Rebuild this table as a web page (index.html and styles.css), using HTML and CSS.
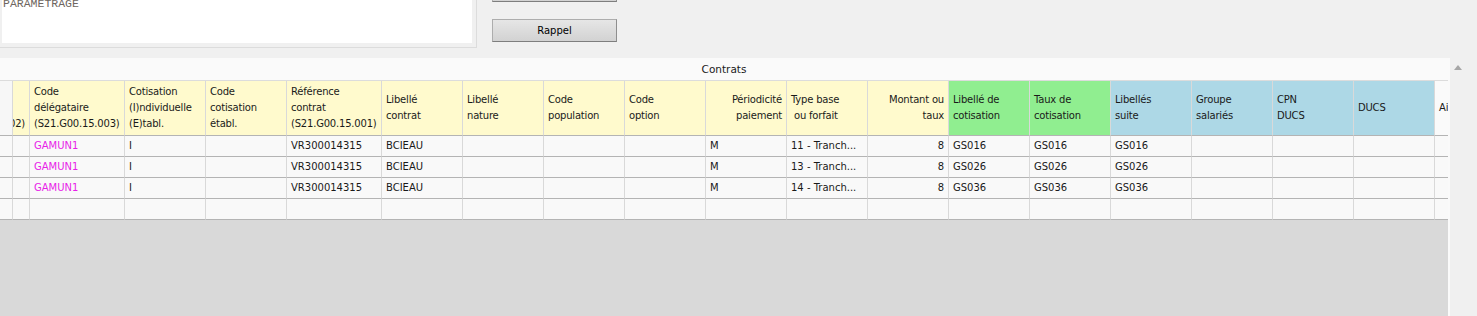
FILE: index.html
```html
<!DOCTYPE html>
<html>
<head>
    <title>Contrats</title>
    <meta charset="utf-8" />
    <link rel="stylesheet" href="styles.css">
</head>
<body>
    <div class="top">
        <div class="memo">
            <div class="memo-text">PARAMETRAGE</div>
        </div>
        <div class="actions">
            <button class="win-button"></button>
            <button class="win-button">Rappel</button>
        </div>
    </div>

    <div class="main">
        <div class="grid-panel">
            <div class="caption">Contrats</div>

            <div class="row head">
                <div class="hcell corner"></div>
                <div class="hcell yellow clip"><div>Code<br>organisme<br>(S21.G00.15.002)</div></div>
                <div class="hcell yellow">Code<br>délégataire<br>(S21.G00.15.003)</div>
                <div class="hcell yellow">Cotisation<br>(I)ndividuelle<br>(E)tabl.</div>
                <div class="hcell yellow">Code<br>cotisation<br>établ.</div>
                <div class="hcell yellow">Référence<br>contrat<br>(S21.G00.15.001)</div>
                <div class="hcell yellow">Libellé<br>contrat</div>
                <div class="hcell yellow">Libellé<br>nature</div>
                <div class="hcell yellow">Code<br>population</div>
                <div class="hcell yellow">Code<br>option</div>
                <div class="hcell yellow right">Périodicité<br>paiement</div>
                <div class="hcell yellow">Type base<br>&nbsp;ou forfait</div>
                <div class="hcell yellow right">Montant ou<br>taux</div>
                <div class="hcell green">Libellé de<br>cotisation</div>
                <div class="hcell green">Taux de<br>cotisation</div>
                <div class="hcell blue">Libellés<br>suite</div>
                <div class="hcell blue">Groupe<br>salariés</div>
                <div class="hcell blue">CPN<br>DUCS</div>
                <div class="hcell blue">DUCS</div>
                <div class="hcell plain">Aide</div>
            </div>

            <div class="row">
                <div class="cell"></div><div class="cell"></div>
                <div class="cell pink">GAMUN1</div>
                <div class="cell">I</div>
                <div class="cell"></div>
                <div class="cell">VR300014315</div>
                <div class="cell">BCIEAU</div>
                <div class="cell"></div><div class="cell"></div><div class="cell"></div>
                <div class="cell">M</div>
                <div class="cell">11 - Tranch...</div>
                <div class="cell num">8</div>
                <div class="cell">GS016</div>
                <div class="cell">GS016</div>
                <div class="cell">GS016</div>
                <div class="cell"></div><div class="cell"></div><div class="cell"></div><div class="cell"></div>
            </div>
            <div class="row">
                <div class="cell"></div><div class="cell"></div>
                <div class="cell pink">GAMUN1</div>
                <div class="cell">I</div>
                <div class="cell"></div>
                <div class="cell">VR300014315</div>
                <div class="cell">BCIEAU</div>
                <div class="cell"></div><div class="cell"></div><div class="cell"></div>
                <div class="cell">M</div>
                <div class="cell">13 - Tranch...</div>
                <div class="cell num">8</div>
                <div class="cell">GS026</div>
                <div class="cell">GS026</div>
                <div class="cell">GS026</div>
                <div class="cell"></div><div class="cell"></div><div class="cell"></div><div class="cell"></div>
            </div>
            <div class="row">
                <div class="cell"></div><div class="cell"></div>
                <div class="cell pink">GAMUN1</div>
                <div class="cell">I</div>
                <div class="cell"></div>
                <div class="cell">VR300014315</div>
                <div class="cell">BCIEAU</div>
                <div class="cell"></div><div class="cell"></div><div class="cell"></div>
                <div class="cell">M</div>
                <div class="cell">14 - Tranch...</div>
                <div class="cell num">8</div>
                <div class="cell">GS036</div>
                <div class="cell">GS036</div>
                <div class="cell">GS036</div>
                <div class="cell"></div><div class="cell"></div><div class="cell"></div><div class="cell"></div>
            </div>
            <!-- empty row for a new entry -->
            <div class="row">
                <div class="cell"></div><div class="cell"></div><div class="cell"></div><div class="cell"></div>
                <div class="cell"></div><div class="cell"></div><div class="cell"></div><div class="cell"></div>
                <div class="cell"></div><div class="cell"></div><div class="cell"></div><div class="cell"></div>
                <div class="cell"></div><div class="cell"></div><div class="cell"></div><div class="cell"></div>
                <div class="cell"></div><div class="cell"></div><div class="cell"></div><div class="cell"></div>
            </div>
        </div>
        <div class="vscroll">
            <div class="arrow-up"></div>
        </div>
    </div>
</body>
</html>
```

FILE: styles.css
```css
html, body {
    margin: 0;
    height: 316px;
    overflow: hidden;
    background-color: #f0f0f0;
    font-family: "DejaVu Sans", Verdana, sans-serif;
    font-size: 10px;
    color: #1a1a1a;
}

.top {
    display: flex;
    height: 48px;
}

.memo {
    width: 470px;
    height: 43px;
    padding: 0 4px 4px 2px;
    border-right: 1px solid #dcdcdc;
    border-bottom: 1px solid #dcdcdc;
}

.memo-text {
    height: 43px;
    padding: 0 1px;
    background-color: #ffffff;
    font-family: "Liberation Mono", "Courier New", monospace;
    font-size: 11.5px;
    line-height: 8px;
    color: #6e6660;
    overflow: hidden;
}

.actions {
    display: flex;
    flex-direction: column;
    gap: 17px;
    margin-left: 15px;
    margin-top: -21px;
}

.win-button {
    width: 125px;
    height: 23px;
    padding: 0;
    border: 1px solid #adadad;
    border-right-color: #8e8e8e;
    border-bottom-color: #7e7e7e;
    border-radius: 0;
    background: linear-gradient(#e6e6e6, #d2d2d2);
    font-family: "DejaVu Sans", Verdana, sans-serif;
    font-size: 10px;
    color: #000;
}

.main {
    display: flex;
    margin-top: 10px;
    height: 258px;
}

.grid-panel {
    width: 1448px;
    border-right: 2px solid #fafafa;
    background-color: #d9d9d9;
    overflow: hidden;
}

.caption {
    height: 22px;
    line-height: 22px;
    text-align: center;
    background-color: #fafafa;
    border-bottom: 1px solid #dcdcdc;
    font-size: 10.5px;
}

.row {
    display: grid;
    grid-template-columns: 13px 17px 95px 81px 81px 95px repeat(14, 81px);
}

.hcell, .cell {
    box-sizing: border-box;
    border-right: 1px solid #d9d9d9;
    border-bottom: 1px solid #b4b4b4;
    padding: 0 4px;
    overflow: hidden;
}

.hcell {
    display: flex;
    align-items: center;
    height: 55px;
    line-height: 16px;
    letter-spacing: -0.2px;
}

.hcell.corner { background-color: #f7f7f7; }
.hcell.yellow { background-color: #fffacd; }
.hcell.green  { background-color: #90ee90; }
.hcell.blue   { background-color: #add8e6; }
.hcell.plain  { background-color: #fafafa; }

.hcell.right {
    justify-content: flex-end;
    text-align: right;
}

/* scrolled column: only the end of its label shows */
.hcell.clip {
    justify-content: flex-end;
    padding: 0 4px 0 0;
}

.hcell.clip div {
    flex-shrink: 0;
    white-space: nowrap;
}

.cell {
    height: 21px;
    line-height: 20px;
    white-space: nowrap;
    background-color: #f9f9f9;
}

.cell.pink {
    color: #e81ee8;
}

.cell.num {
    text-align: right;
}

.vscroll {
    flex: 1;
    padding: 7px 0 0 4px;
}

.arrow-up {
    width: 0;
    height: 0;
    border-left: 4.5px solid transparent;
    border-right: 4.5px solid transparent;
    border-bottom: 5px solid #a6a6a6;
}
```
